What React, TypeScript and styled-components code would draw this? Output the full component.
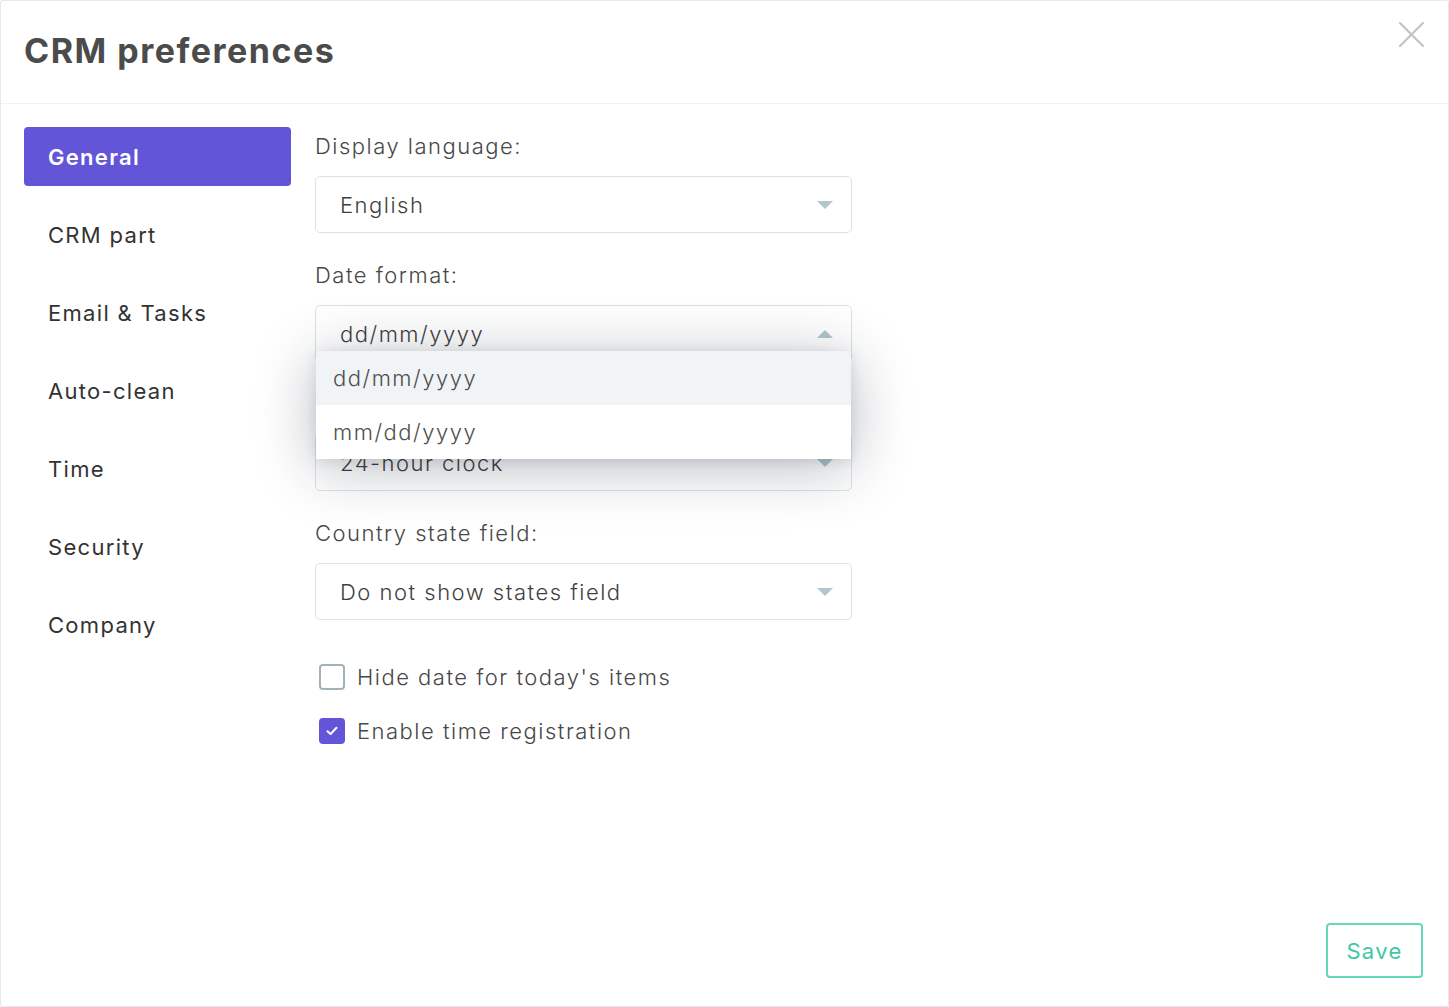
import { useState } from "react";
import styled, { createGlobalStyle } from "styled-components";

const Palette = {
  Accent: "#6355d8",
  Text: "#3d3d3d",
  Label: "#474747",
  Border: "#dbe2e7",
  Caret: "#b2c6cf",
  Save: "#3ec8a4",
};

const GlobalStyle = createGlobalStyle`
  html, body {
    margin: 0;
    padding: 0;
    background: #fff;
  }
  body {
    font-family: Inter, "Open Sans", "Noto Sans", sans-serif;
    color: ${Palette.Text};
  }
  * {
    box-sizing: border-box;
  }
`;

const Modal = styled.div`
  width: 1449px;
  height: 1007px;
  display: flex;
  flex-direction: column;
  background: #fff;
  border: 1px solid #e7e8ee;
  border-top-color: #e4ebef;
  border-radius: 3px;
  overflow: hidden;
`;

const Header = styled.header`
  height: 103px;
  flex-shrink: 0;
  display: flex;
  align-items: center;
  justify-content: space-between;
  padding: 0 22px 4px 23px;
  border-bottom: 1px solid #f1f2f3;
`;

const Title = styled.h1`
  margin: 0;
  font-size: 34px;
  font-weight: 700;
  letter-spacing: 1.5px;
  color: #4b4b4b;
`;

const CloseButton = styled.button`
  width: 30px;
  height: 30px;
  margin-top: -30px;
  padding: 0;
  border: none;
  background: none;
  color: #c3c3c3;
  cursor: pointer;
`;

const Body = styled.div`
  flex: 1;
  display: flex;
  gap: 24px;
  padding: 23px 23px 0;
`;

const Sidebar = styled.nav`
  width: 267px;
  display: flex;
  flex-direction: column;
  gap: 19px;
`;

const NavItem = styled.div<{ $active?: boolean }>`
  height: 59px;
  display: flex;
  align-items: center;
  padding-left: 24px;
  border-radius: 4px;
  font-size: 22px;
  font-weight: ${(p) => (p.$active ? 600 : 400)};
  letter-spacing: 1.3px;
  color: ${(p) => (p.$active ? "#fff" : "#333")};
  background: ${(p) => (p.$active ? Palette.Accent : "transparent")};
`;

const Content = styled.div`
  width: 537px;
  padding-top: 4px;
  display: flex;
  flex-direction: column;
`;

const Field = styled.div`
  display: flex;
  flex-direction: column;
  gap: 15px;
  margin-bottom: 27px;
`;

const Label = styled.label`
  height: 30px;
  line-height: 30px;
  font-size: 22px;
  font-weight: 300;
  letter-spacing: 1.5px;
  color: ${Palette.Label};
`;

const SelectWrap = styled.div`
  position: relative;
`;

const SelectBox = styled.div`
  height: 57px;
  display: flex;
  align-items: center;
  justify-content: space-between;
  padding: 0 18px 0 24px;
  border: 1px solid ${Palette.Border};
  border-radius: 5px;
  font-size: 22px;
  font-weight: 300;
  letter-spacing: 1.5px;
  color: #3f3f3f;
  background: #fff;
`;

const Caret = styled.span<{ $up?: boolean }>`
  width: 0;
  height: 0;
  border-left: 8px solid transparent;
  border-right: 8px solid transparent;
  ${(p) =>
    p.$up
      ? `border-bottom: 8px solid ${Palette.Caret};`
      : `border-top: 8px solid ${Palette.Caret};`}
`;

const Menu = styled.ul`
  position: absolute;
  top: 46px;
  left: 1px;
  right: 1px;
  margin: 0;
  padding: 0;
  list-style: none;
  background: #fff;
  border-radius: 0 0 4px 4px;
  box-shadow: 0 8px 60px rgba(20, 30, 50, 0.3), 0 2px 12px rgba(20, 30, 50, 0.1);
  z-index: 3;
`;

const Option = styled.li<{ $hover?: boolean }>`
  height: 54px;
  display: flex;
  align-items: center;
  padding-left: 17px;
  font-size: 22px;
  font-weight: 300;
  letter-spacing: 1.5px;
  color: #4f4f4f;
  background: ${(p) => (p.$hover ? "#f0f4f7" : "#fff")};
`;

const Checks = styled.div`
  display: flex;
  flex-direction: column;
  gap: 28px;
  margin-top: 17px;
  padding-left: 4px;
`;

const CheckRow = styled.label`
  display: flex;
  align-items: center;
  gap: 12px;
  font-size: 22px;
  font-weight: 300;
  letter-spacing: 1.5px;
  color: ${Palette.Label};
  cursor: pointer;
`;

const Box = styled.span<{ $checked?: boolean }>`
  width: 26px;
  height: 26px;
  border-radius: 4px;
  display: flex;
  align-items: center;
  justify-content: center;
  border: 2px solid ${(p) => (p.$checked ? Palette.Accent : "#a3b1b9")};
  background: ${(p) => (p.$checked ? Palette.Accent : "#fff")};
`;

const Footer = styled.footer`
  display: flex;
  justify-content: flex-end;
  padding: 0 25px 28px;
`;

const SaveButton = styled.button`
  width: 97px;
  height: 55px;
  border: 2px solid #66d6ba;
  border-radius: 4px;
  background: #fff;
  font-family: inherit;
  font-size: 22px;
  font-weight: 400;
  letter-spacing: 1.3px;
  color: ${Palette.Save};
  cursor: pointer;
`;

const navItems = [
  "General",
  "CRM part",
  "Email & Tasks",
  "Auto-clean",
  "Time",
  "Security",
  "Company",
];

const CheckMark = () => (
  <svg width="14" height="14" viewBox="0 0 14 14" fill="none">
    <path
      d="M2.5 7.2 L5.6 10 L11.5 3.8"
      stroke="#fff"
      strokeWidth="2"
      strokeLinecap="round"
      strokeLinejoin="round"
    />
  </svg>
);

const App = () => {
  const [hideDate, setHideDate] = useState(false);
  const [timeReg, setTimeReg] = useState(true);

  return (
    <>
      <GlobalStyle />
      <Modal>
        <Header>
          <Title>CRM preferences</Title>
          <CloseButton aria-label="Close">
            <svg width="30" height="30" viewBox="0 0 30 30" fill="none">
              <path
                d="M4 3 L27 26 M27 3 L4 26"
                stroke="currentColor"
                strokeWidth="2.2"
                strokeLinecap="round"
              />
            </svg>
          </CloseButton>
        </Header>
        <Body>
          <Sidebar>
            {navItems.map((item, i) => (
              <NavItem key={item} $active={i === 0}>
                {item}
              </NavItem>
            ))}
          </Sidebar>
          <Content>
            <Field>
              <Label>Display language:</Label>
              <SelectBox>
                English
                <Caret />
              </SelectBox>
            </Field>
            <Field>
              <Label>Date format:</Label>
              <SelectWrap>
                <SelectBox>
                  dd/mm/yyyy
                  <Caret $up />
                </SelectBox>
                <Menu>
                  <Option $hover>dd/mm/yyyy</Option>
                  <Option>mm/dd/yyyy</Option>
                </Menu>
              </SelectWrap>
            </Field>
            <Field>
              <Label>Time format:</Label>
              <SelectBox>
                24-hour clock
                <Caret />
              </SelectBox>
            </Field>
            <Field>
              <Label>Country state field:</Label>
              <SelectBox>
                Do not show states field
                <Caret />
              </SelectBox>
            </Field>
            <Checks>
              <CheckRow onClick={() => setHideDate(!hideDate)}>
                <Box $checked={hideDate}>{hideDate && <CheckMark />}</Box>
                Hide date for today's items
              </CheckRow>
              <CheckRow onClick={() => setTimeReg(!timeReg)}>
                <Box $checked={timeReg}>{timeReg && <CheckMark />}</Box>
                Enable time registration
              </CheckRow>
            </Checks>
          </Content>
        </Body>
        <Footer>
          <SaveButton>Save</SaveButton>
        </Footer>
      </Modal>
    </>
  );
};

export default App;
